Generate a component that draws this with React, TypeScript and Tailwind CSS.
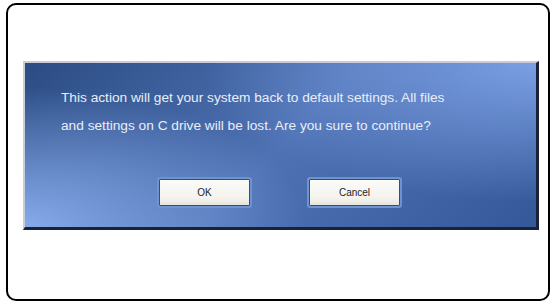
import React from "react";

const DialogButton: React.FC<{ label: string }> = ({ label }) => (
  <button className="flex h-[31px] w-[95px] items-center justify-center rounded-[3px] border-2 border-[#6f93cf] bg-[linear-gradient(180deg,#fbfbf8_0%,#f4f3ee_70%,#e4e2da_100%)] text-[10px] text-[#222] shadow-[inset_0_0_0_1px_#2f4d86] font-['Liberation_Sans',Arial,sans-serif]">
    {label}
  </button>
);

export default function App() {
  return (
    <div className="flex h-[304px] w-[556px] bg-white px-[6px] pb-[3px] pt-[3px]">
      <div className="flex w-full flex-col rounded-[10px] border-2 border-black bg-white pl-[15px] pr-[13px] pt-[56px]">
        <div className="flex h-[169px] w-[516px] flex-col border-l-2 border-t-2 border-r-[3px] border-b-[3px] border-l-[#c9ccd4] border-t-[#c9ccd4] border-r-[#1a2236] border-b-[#1a2236] bg-[radial-gradient(ellipse_65%_85%_at_100%_0%,#7a9fe2_0%,rgba(122,159,226,0)_100%),radial-gradient(ellipse_55%_85%_at_0%_100%,#86aaea_0%,rgba(134,170,234,0)_100%),linear-gradient(135deg,#2b4c83_0%,#4f72b4_50%,#34589a_100%)] pl-[36px] pt-[21px] font-['Liberation_Sans',Arial,sans-serif] text-[13.7px] text-[#e8eef8]">
          <p className="leading-[28px]">
            This action will get your system back to default settings. All files
          </p>
          <p className="leading-[28px]">
            and settings on C drive will be lost. Are you sure to continue?
          </p>
          <div className="mt-[37px] flex gap-[55px] pl-[96px]">
            <DialogButton label="OK" />
            <DialogButton label="Cancel" />
          </div>
        </div>
      </div>
    </div>
  );
}
